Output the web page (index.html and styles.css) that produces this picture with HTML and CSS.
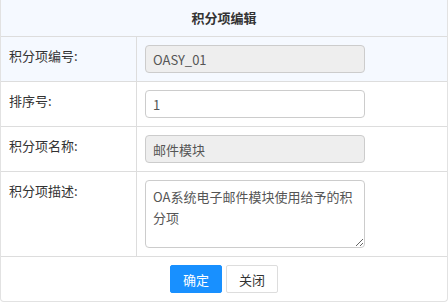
FILE: index.html
```html
<!DOCTYPE html>
<html lang="zh-CN">
<head>
  <meta charset="UTF-8" />
  <meta name="viewport" content="width=device-width, initial-scale=1.0"/>
  <title>积分项编辑</title>
  <link rel="stylesheet" href="styles.css">
</head>
<body>
  <div class="panel">
    <div class="panel-title">积分项编辑</div>

    <table class="form-table">
      <tr class="active">
        <td class="label">积分项编号:</td>
        <td><input type="text" class="field" value="OASY_01" disabled></td>
      </tr>
      <tr>
        <td class="label">排序号:</td>
        <td><input type="text" class="field" value="1"></td>
      </tr>
      <tr>
        <td class="label">积分项名称:</td>
        <td><input type="text" class="field" value="邮件模块" disabled></td>
      </tr>
      <tr>
        <td class="label">积分项描述:</td>
        <td><textarea class="field area">OA系统电子邮件模块使用给予的积分项</textarea></td>
      </tr>
    </table>

    <div class="footer">
      <button class="btn btn-primary">确定</button>
      <button class="btn">关闭</button>
    </div>
  </div>
</body>
</html>
```

FILE: styles.css
```css
body {
  margin: 0;
  font-family: "Noto Sans CJK SC", "Open Sans", sans-serif;
  font-size: 13px;
  color: #333;
  background: #fff;
}

.panel {
  width: 446px;
  border: 1px solid #e2e2e2;
  border-top: none;
  border-radius: 0 0 4px 4px;
}

.panel-title {
  height: 36px;
  line-height: 36px;
  text-align: center;
  font-weight: bold;
  background: #f5f9ff;
  border-bottom: 1px solid #ddd;
}

.form-table {
  width: 100%;
  border-collapse: collapse;
}

.form-table tr {
  border-bottom: 1px solid #ddd;
}

.form-table tr.active {
  background: #f5f9ff;
}

.form-table td {
  padding: 8px;
  vertical-align: top;
}

.form-table td.label {
  width: 119px;
  line-height: 20px;
  padding-top: 9px;
  border-right: 1px solid #ddd;
}

.field {
  display: block;
  box-sizing: border-box;
  width: 220px;
  height: 28px;
  margin: 0;
  padding: 4px 7px;
  font-family: "Noto Sans CJK SC", "Open Sans", sans-serif;
  font-size: 13px;
  line-height: 18px;
  color: #555;
  background: #fff;
  border: 1px solid #ccc;
  border-radius: 4px;
}

.field:disabled {
  background: #eee;
  color: #555;
}

.area {
  height: 68px;
  padding-top: 5px;
  line-height: 21px;
}

.footer {
  padding: 8px 0;
  text-align: center;
  font-size: 0;
}

.btn {
  height: 28px;
  width: 52px;
  margin: 0 2px;
  padding: 0;
  font-family: "Noto Sans CJK SC", sans-serif;
  font-size: 13px;
  color: #333;
  background: #fff;
  border: 1px solid #ddd;
  border-radius: 2px;
  cursor: pointer;
}

.btn-primary {
  color: #fff;
  background: #1890ff;
  border-color: #1890ff;
}
```
